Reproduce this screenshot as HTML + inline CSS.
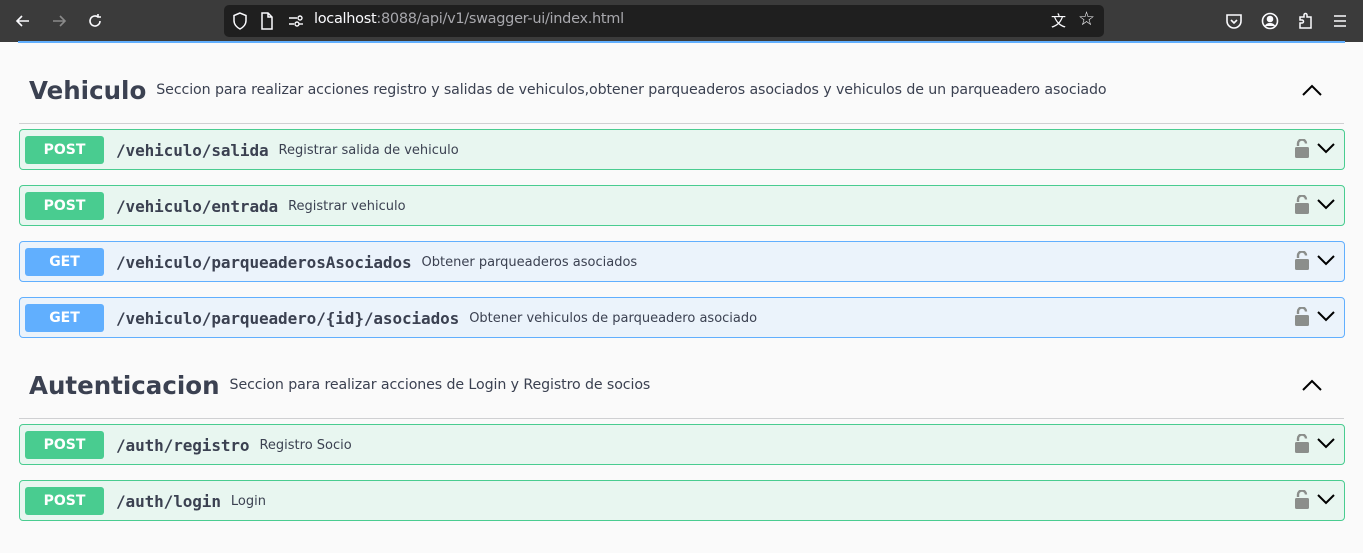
<!DOCTYPE html>
<html><head><meta charset="utf-8"><style>
*{box-sizing:border-box;margin:0;padding:0}
body{width:1363px;height:553px;overflow:hidden;background:#fafafa;font-family:"DejaVu Sans","Liberation Sans",sans-serif;color:#3b4151;position:relative}
.bar{position:absolute;left:0;top:0;width:1363px;height:42px;background:#3b3b3b}
.url{position:absolute;left:224px;top:5px;width:880px;height:32px;background:#1f1f1f;border-radius:5px}
.blue{position:absolute;left:18px;top:41px;width:1327px;height:2px;background:#61affe}
.ic{position:absolute;color:#fbfbfe}
.tag{position:absolute;left:19px;width:1325px;display:flex;align-items:center}
.tag h3{font-size:24.5px;font-weight:bold;margin-left:10px}
.tag span{font-size:14.2px;margin-left:10px;letter-spacing:-0.1px}
.line{position:absolute;left:19px;width:1325px;height:1px;background:#cfd0d2}
.op{position:absolute;left:19px;width:1326px;height:41px;border:1px solid #49cc90;background:#e8f6f0;border-radius:4px;display:flex;align-items:center;padding-top:1px}
.op.get{border-color:#61affe;background:#ebf3fb}
.m{width:79px;height:28px;margin-left:5px;background:#49cc90;color:#fff;border-radius:3px;font-weight:bold;font-size:14px;text-align:center;line-height:28px}
.get .m{background:#61affe}
.p{font-family:"DejaVu Sans Mono","Liberation Mono",monospace;font-weight:bold;font-size:16px;margin-left:12px;letter-spacing:-0.1px}
.d{font-size:13px;margin-left:10px}
.r{position:absolute;right:0px;top:9px}
</style></head><body>
<div class="bar"></div>
<div class="url"></div>
<svg class="ic" style="left:14px;top:12px" width="18" height="18" viewBox="0 0 18 18" fill="none" stroke="#fbfbfe" stroke-width="1.6"><path d="M15 9H3M8 4L3 9l5 5"/></svg>
<svg style="position:absolute;left:50px;top:12px" width="18" height="18" viewBox="0 0 18 18" fill="none" stroke="#8a8a8a" stroke-width="1.6"><path d="M3 9h12M10 4l5 5-5 5"/></svg>
<svg style="position:absolute;left:86px;top:12px" width="18" height="18" viewBox="0 0 18 18" fill="none" stroke="#fbfbfe" stroke-width="1.6"><path d="M14 9a5 5 0 1 1-2-4M12 2v3h3"/></svg>
<svg style="position:absolute;left:232px;top:12px" width="16" height="18" viewBox="0 0 16 18" fill="none" stroke="#fbfbfe" stroke-width="1.5"><path d="M8 1L2 3.5v5c0 4 3 7 6 8.5 3-1.5 6-4.5 6-8.5v-5z"/></svg>
<svg style="position:absolute;left:260px;top:12px" width="14" height="18" viewBox="0 0 14 18" fill="none" stroke="#fbfbfe" stroke-width="1.5"><path d="M2 1h6l4 4v12H2zM8 1v4h4"/></svg>
<svg style="position:absolute;left:288px;top:14px" width="16" height="14" viewBox="0 0 16 14" fill="none" stroke="#fbfbfe" stroke-width="1.4"><path d="M1 4h8M1 10h5"/><circle cx="12" cy="4" r="2"/><circle cx="9" cy="10" r="2"/><path d="M11 10h4"/></svg>
<div style="position:absolute;left:314px;top:11px;font-size:14.5px;color:#fbfbfe;font-family:'DejaVu Sans',sans-serif;letter-spacing:-0.3px">localhost<span style="color:#a8a8ad">:8088/api/v1/swagger-ui/index.html</span></div>
<div style="position:absolute;left:1051px;top:10px;color:#fbfbfe;font-size:15px">文</div>
<div style="position:absolute;left:1078px;top:8px;color:#fbfbfe;font-size:19px">☆</div>
<svg style="position:absolute;left:1225px;top:12px" width="18" height="18" viewBox="0 0 18 18" fill="none" stroke="#fbfbfe" stroke-width="1.6"><path d="M2 3h14v6a7 7 0 0 1-14 0zM6 8l3 3 3-3"/></svg>
<svg style="position:absolute;left:1261px;top:12px" width="18" height="18" viewBox="0 0 18 18" fill="none" stroke="#fbfbfe" stroke-width="1.6"><circle cx="9" cy="9" r="7.5"/><circle cx="9" cy="7" r="2.5" fill="#fbfbfe"/><path d="M4.5 14c2-3 7-3 9 0" fill="#fbfbfe"/></svg>
<svg style="position:absolute;left:1297px;top:12px" width="18" height="18" viewBox="0 0 18 18" fill="none" stroke="#fbfbfe" stroke-width="1.5"><path d="M3 16V11h2a1.5 1.5 0 0 0 0-3H3V5h4V3a1.5 1.5 0 0 1 3 0v2h4v11z"/></svg>
<svg style="position:absolute;left:1332px;top:13px" width="16" height="16" viewBox="0 0 16 16" stroke="#fbfbfe" stroke-width="1.6"><path d="M2 3h12M2 8h12M2 13h12"/></svg>
<div class="blue"></div>

<div class="tag" style="top:72px;height:36px"><h3>Vehiculo</h3><span>Seccion para realizar acciones registro y salidas de vehiculos,obtener parqueaderos asociados y vehiculos de un parqueadero asociado</span>
<svg style="position:absolute;right:22px;top:12px" width="20" height="12" viewBox="0 0 20 12" fill="none" stroke="#000" stroke-width="2"><path d="M1 11l9-9 9 9"/></svg></div>
<div class="line" style="top:123px"></div>

<div class="op" style="top:129px"><div class="m">POST</div><div class="p">/vehiculo/salida</div><div class="d">Registrar salida de vehiculo</div><div class="r"><svg width="50" height="20" viewBox="0 0 50 20"><path d="M4 7V4.5a4 4 0 0 1 8 0" fill="none" stroke="#8b8e8b" stroke-width="2.4"/><rect x="1" y="8" width="14" height="11" rx="1.5" fill="#8b8e8b"/><path d="M24 5l8 8 8-8" fill="none" stroke="#000" stroke-width="2"/></svg></div></div>
<div class="op" style="top:185px"><div class="m">POST</div><div class="p">/vehiculo/entrada</div><div class="d">Registrar vehiculo</div><div class="r"><svg width="50" height="20" viewBox="0 0 50 20"><path d="M4 7V4.5a4 4 0 0 1 8 0" fill="none" stroke="#8b8e8b" stroke-width="2.4"/><rect x="1" y="8" width="14" height="11" rx="1.5" fill="#8b8e8b"/><path d="M24 5l8 8 8-8" fill="none" stroke="#000" stroke-width="2"/></svg></div></div>
<div class="op get" style="top:241px"><div class="m">GET</div><div class="p">/vehiculo/parqueaderosAsociados</div><div class="d">Obtener parqueaderos asociados</div><div class="r"><svg width="50" height="20" viewBox="0 0 50 20"><path d="M4 7V4.5a4 4 0 0 1 8 0" fill="none" stroke="#8b8e8b" stroke-width="2.4"/><rect x="1" y="8" width="14" height="11" rx="1.5" fill="#8b8e8b"/><path d="M24 5l8 8 8-8" fill="none" stroke="#000" stroke-width="2"/></svg></div></div>
<div class="op get" style="top:297px"><div class="m">GET</div><div class="p">/vehiculo/parqueadero/{id}/asociados</div><div class="d">Obtener vehiculos de parqueadero asociado</div><div class="r"><svg width="50" height="20" viewBox="0 0 50 20"><path d="M4 7V4.5a4 4 0 0 1 8 0" fill="none" stroke="#8b8e8b" stroke-width="2.4"/><rect x="1" y="8" width="14" height="11" rx="1.5" fill="#8b8e8b"/><path d="M24 5l8 8 8-8" fill="none" stroke="#000" stroke-width="2"/></svg></div></div>

<div class="tag" style="top:367px;height:36px"><h3>Autenticacion</h3><span>Seccion para realizar acciones de Login y Registro de socios</span>
<svg style="position:absolute;right:22px;top:12px" width="20" height="12" viewBox="0 0 20 12" fill="none" stroke="#000" stroke-width="2"><path d="M1 11l9-9 9 9"/></svg></div>
<div class="line" style="top:418px"></div>

<div class="op" style="top:424px"><div class="m">POST</div><div class="p">/auth/registro</div><div class="d">Registro Socio</div><div class="r"><svg width="50" height="20" viewBox="0 0 50 20"><path d="M4 7V4.5a4 4 0 0 1 8 0" fill="none" stroke="#8b8e8b" stroke-width="2.4"/><rect x="1" y="8" width="14" height="11" rx="1.5" fill="#8b8e8b"/><path d="M24 5l8 8 8-8" fill="none" stroke="#000" stroke-width="2"/></svg></div></div>
<div class="op" style="top:480px"><div class="m">POST</div><div class="p">/auth/login</div><div class="d">Login</div><div class="r"><svg width="50" height="20" viewBox="0 0 50 20"><path d="M4 7V4.5a4 4 0 0 1 8 0" fill="none" stroke="#8b8e8b" stroke-width="2.4"/><rect x="1" y="8" width="14" height="11" rx="1.5" fill="#8b8e8b"/><path d="M24 5l8 8 8-8" fill="none" stroke="#000" stroke-width="2"/></svg></div></div>
</body></html>
